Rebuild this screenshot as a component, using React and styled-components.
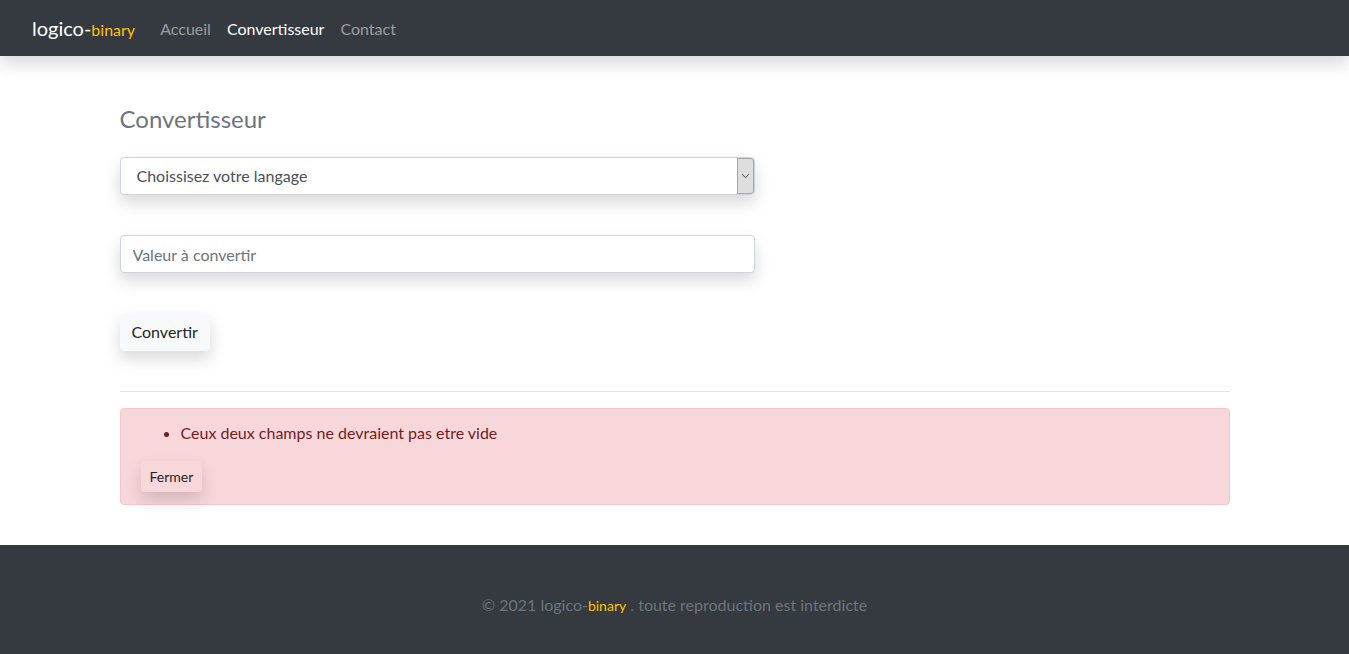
import React from "react";
import styled, { createGlobalStyle } from "styled-components";

const Global = createGlobalStyle`
  html, body { margin: 0; padding: 0; }
  body {
    font-family: "Segoe UI", Lato, "Open Sans", sans-serif;
    font-size: 16px;
    line-height: 1.5;
    color: #212529;
    background: #fff;
  }
  * { box-sizing: border-box; }
`;

const Navbar = styled.nav`
  height: 56px;
  background: #343a40;
  display: flex;
  align-items: center;
  padding: 2px 16px 0 32px;
  box-shadow: 0 8px 16px rgba(0, 0, 0, 0.15);
  position: relative;
  z-index: 1;
`;

const Brand = styled.a`
  color: #fff;
  font-size: 20px;
  line-height: 30px;
  margin-right: 17px;
  text-decoration: none;
`;

const Accent = styled.span`
  color: #ffc107;
  font-size: ${(p) => p.$size || 16}px;
`;

const NavLink = styled.a`
  color: ${(p) => (p.$active ? "#fff" : "rgba(255,255,255,0.5)")};
  padding: 8px;
  text-decoration: none;
  font-size: 16px;
`;

const Container = styled.main`
  width: 1140px;
  margin: 0 auto;
  padding: 48px 15px 40px;
`;

const Title = styled.h3`
  margin: 0 0 24px;
  font-size: 24px;
  font-weight: 400;
  line-height: 29px;
  color: #6c757d;
`;

const Col = styled.div`
  width: 635px;
  display: flex;
  flex-direction: column;
  align-items: flex-start;
  gap: 40px;
`;

const SelectBox = styled.div`
  width: 100%;
  height: 38px;
  display: flex;
  align-items: stretch;
  border: 1px solid #ced4da;
  border-radius: 4px;
  background: #fff;
  box-shadow: 0 8px 16px rgba(0, 0, 0, 0.15);
`;

const Select = styled.select`
  flex: 1;
  appearance: none;
  border: 0;
  background: transparent;
  font: inherit;
  font-size: 16px;
  color: #495057;
  padding: 0 0 0 16px;
  outline: none;
`;

const ArrowBox = styled.span`
  width: 17px;
  background: #dedede;
  border: 1px solid #a5a5a5;
  border-radius: 0 3px 3px 0;
  display: flex;
  align-items: center;
  justify-content: center;
`;

const Input = styled.input`
  width: 100%;
  height: 38px;
  border: 1px solid #ced4da;
  border-radius: 4px;
  padding: 0 12px;
  font: inherit;
  font-size: 16px;
  color: #495057;
  box-shadow: 0 8px 16px rgba(0, 0, 0, 0.15);
  outline: none;
  &::placeholder { color: #6c757d; }
`;

const Button = styled.button`
  font: inherit;
  font-size: ${(p) => (p.$small ? 14 : 16)}px;
  line-height: ${(p) => (p.$small ? 21 : 24)}px;
  padding: ${(p) => (p.$small ? "4px 8px" : "6px 11px")};
  border: 1px solid ${(p) => p.$bg};
  border-radius: ${(p) => (p.$small ? 3 : 4)}px;
  background: ${(p) => p.$bg};
  color: #212529;
  box-shadow: 0 8px 16px rgba(0, 0, 0, 0.15);
  cursor: pointer;
`;

const Rule = styled.hr`
  margin: 40px 0 16px;
  border: 0;
  border-top: 1px solid rgba(0, 0, 0, 0.1);
`;

const Alert = styled.div`
  background: #f8d7da;
  border: 1px solid #f5c6cb;
  border-radius: 4px;
  color: #721c24;
  padding: 12px 20px;
`;

const List = styled.ul`
  margin: 0 0 16px;
  padding-left: 40px;
`;

const Footer = styled.footer`
  background: #343a40;
  padding: 48px 0;
  text-align: center;
  color: #6c757d;
  font-size: 16px;
  line-height: 24px;
`;

export default function App() {
  return (
    <>
      <Global />
      <Navbar>
        <Brand href="#">
          logico-<Accent>binary</Accent>
        </Brand>
        <NavLink href="#">Accueil</NavLink>
        <NavLink href="#" $active>Convertisseur</NavLink>
        <NavLink href="#">Contact</NavLink>
      </Navbar>
      <Container>
        <Title>Convertisseur</Title>
        <Col>
          <SelectBox>
            <Select defaultValue="">
              <option value="">Choissisez votre langage</option>
            </Select>
            <ArrowBox>
              <svg width="9" height="6" viewBox="0 0 9 6">
                <path d="M1 1.2 L4.5 4.6 L8 1.2" fill="none" stroke="#555" strokeWidth="1" />
              </svg>
            </ArrowBox>
          </SelectBox>
          <Input placeholder="Valeur à convertir" />
          <Button $bg="#f8f9fa">Convertir</Button>
        </Col>
        <Rule />
        <Alert>
          <List>
            <li>Ceux deux champs ne devraient pas etre vide</li>
          </List>
          <Button $small $bg="#f8d7da">Fermer</Button>
        </Alert>
      </Container>
      <Footer>
        © 2021 logico-<Accent $size={14}>binary</Accent> . toute reproduction est interdicte
      </Footer>
    </>
  );
}
